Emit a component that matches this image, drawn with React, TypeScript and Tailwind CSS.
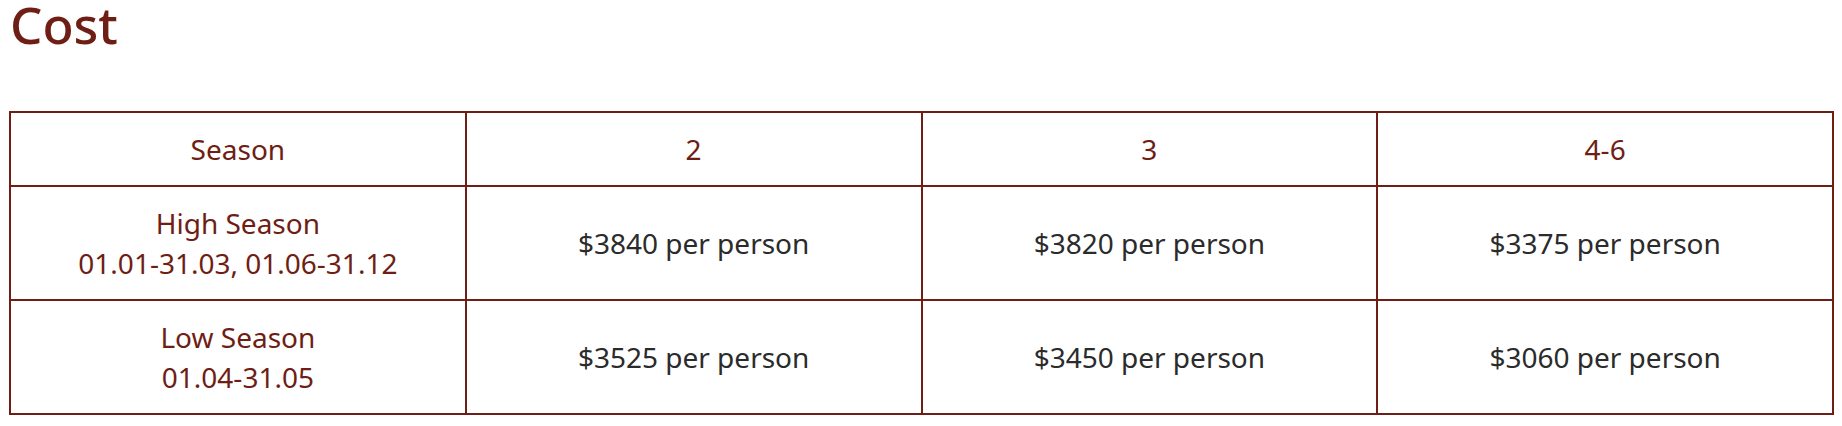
import React from 'react';

type PriceRow = {
  season: string;
  dates: string;
  prices: string[];
};

const rows: PriceRow[] = [
  { season: 'High Season', dates: '01.01-31.03, 01.06-31.12', prices: ['$3840', '$3820', '$3375'] },
  { season: 'Low Season', dates: '01.04-31.05', prices: ['$3525', '$3450', '$3060'] },
];

const headers = ['Season', '2', '3', '4-6'];

const App: React.FC = () => {
  return (
    <div className="min-h-screen bg-white pl-[9px] pr-[8px] font-['Noto_Sans',sans-serif]">
      <h1 className="pl-[1px] text-[51px] leading-[48px] font-medium text-[#6e1e14]">Cost</h1>

      {/* Price table */}
      <table className="mt-[63px] w-full table-fixed border-separate border-spacing-0 border-l-2 border-t-2 border-[#6e1e14] text-[28px] leading-[40px]">
        <thead>
          <tr>
            {headers.map((h) => (
              <th
                key={h}
                className="border-r-2 border-b-2 border-[#6e1e14] py-4 text-center font-normal text-[#6e1e14]"
              >
                {h}
              </th>
            ))}
          </tr>
        </thead>
        <tbody>
          {rows.map((row) => (
            <tr key={row.season}>
              <td className="border-r-2 border-b-2 border-[#6e1e14] py-4 text-center text-[#6e1e14]">
                {row.season}
                <br />
                {row.dates}
              </td>
              {row.prices.map((p, i) => (
                <td key={i} className="border-r-2 border-b-2 border-[#6e1e14] py-4 text-center text-[#2b2b2b]">
                  {p} per person
                </td>
              ))}
            </tr>
          ))}
        </tbody>
      </table>
    </div>
  );
};

export default App;
